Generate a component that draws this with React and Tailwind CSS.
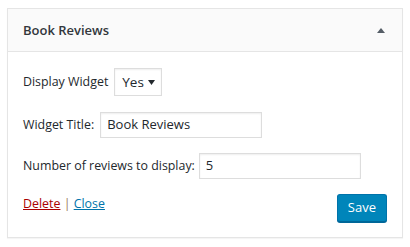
export default function App() {
    return (
        <div className="min-h-screen bg-white pt-2 pl-[7px] font-['Open_Sans',sans-serif] text-[12.4px] text-[#23282d]">
            <div className="w-[396px] border border-[#e5e5e5] bg-white shadow-[0_1px_1px_rgba(0,0,0,0.04)]">
                <div className="flex h-[43px] items-center justify-between border-b border-[#e5e5e5] bg-[#fafafa] pl-[15px] pr-4">
                    <h3 className="text-[13px] font-semibold leading-none text-[#32373c]">Book Reviews</h3>
                    <svg width="8" height="5" viewBox="0 0 8 5" className="mr-[1px]">
                        <path d="M0 5 L4 0 L8 5 Z" fill="#555d66" />
                    </svg>
                </div>
                <div className="px-[15px] pb-[15px]">
                    <div className="mt-4 flex items-center gap-[6px]">
                        <label>Display Widget</label>
                        <div className="flex h-7 w-12 items-center justify-between border border-[#ddd] bg-white pl-[7px] pr-[6px] shadow-[0_1px_2px_rgba(0,0,0,0.07)_inset]">
                            <span className="text-[13.5px]">Yes</span>
                            <svg width="7" height="5" viewBox="0 0 7 5">
                                <path d="M0 0 L7 0 L3.5 5 Z" fill="#23282d" />
                            </svg>
                        </div>
                    </div>
                    <div className="mt-4 flex items-center gap-[6px]">
                        <label>Widget Title:</label>
                        <div className="flex h-[26px] w-[162px] items-center border border-[#ddd] bg-white px-[6px] text-[13px] shadow-[0_1px_2px_rgba(0,0,0,0.07)_inset]">
                            Book Reviews
                        </div>
                    </div>
                    <div className="mt-[15px] flex items-center gap-[4px]">
                        <label>Number of reviews to display:</label>
                        <div className="flex h-[26px] w-[162px] items-center border border-[#ddd] bg-white px-[6px] text-[13px] shadow-[0_1px_2px_rgba(0,0,0,0.07)_inset]">
                            5
                        </div>
                    </div>
                    <div className="mt-[15px] flex items-start justify-between">
                        <div className="pt-[1px]">
                            <a className="text-[#a00] underline">Delete</a>
                            <span className="text-[#9a7d5a]"> | </span>
                            <a className="text-[#0073aa] underline">Close</a>
                        </div>
                        <button className="h-7 rounded-[3px] border border-[#0073aa] border-b-[#006799] bg-[#0085ba] px-[10px] text-[13px] text-white shadow-[0_1px_0_#006799]">
                            Save
                        </button>
                    </div>
                </div>
            </div>
        </div>
    );
}
